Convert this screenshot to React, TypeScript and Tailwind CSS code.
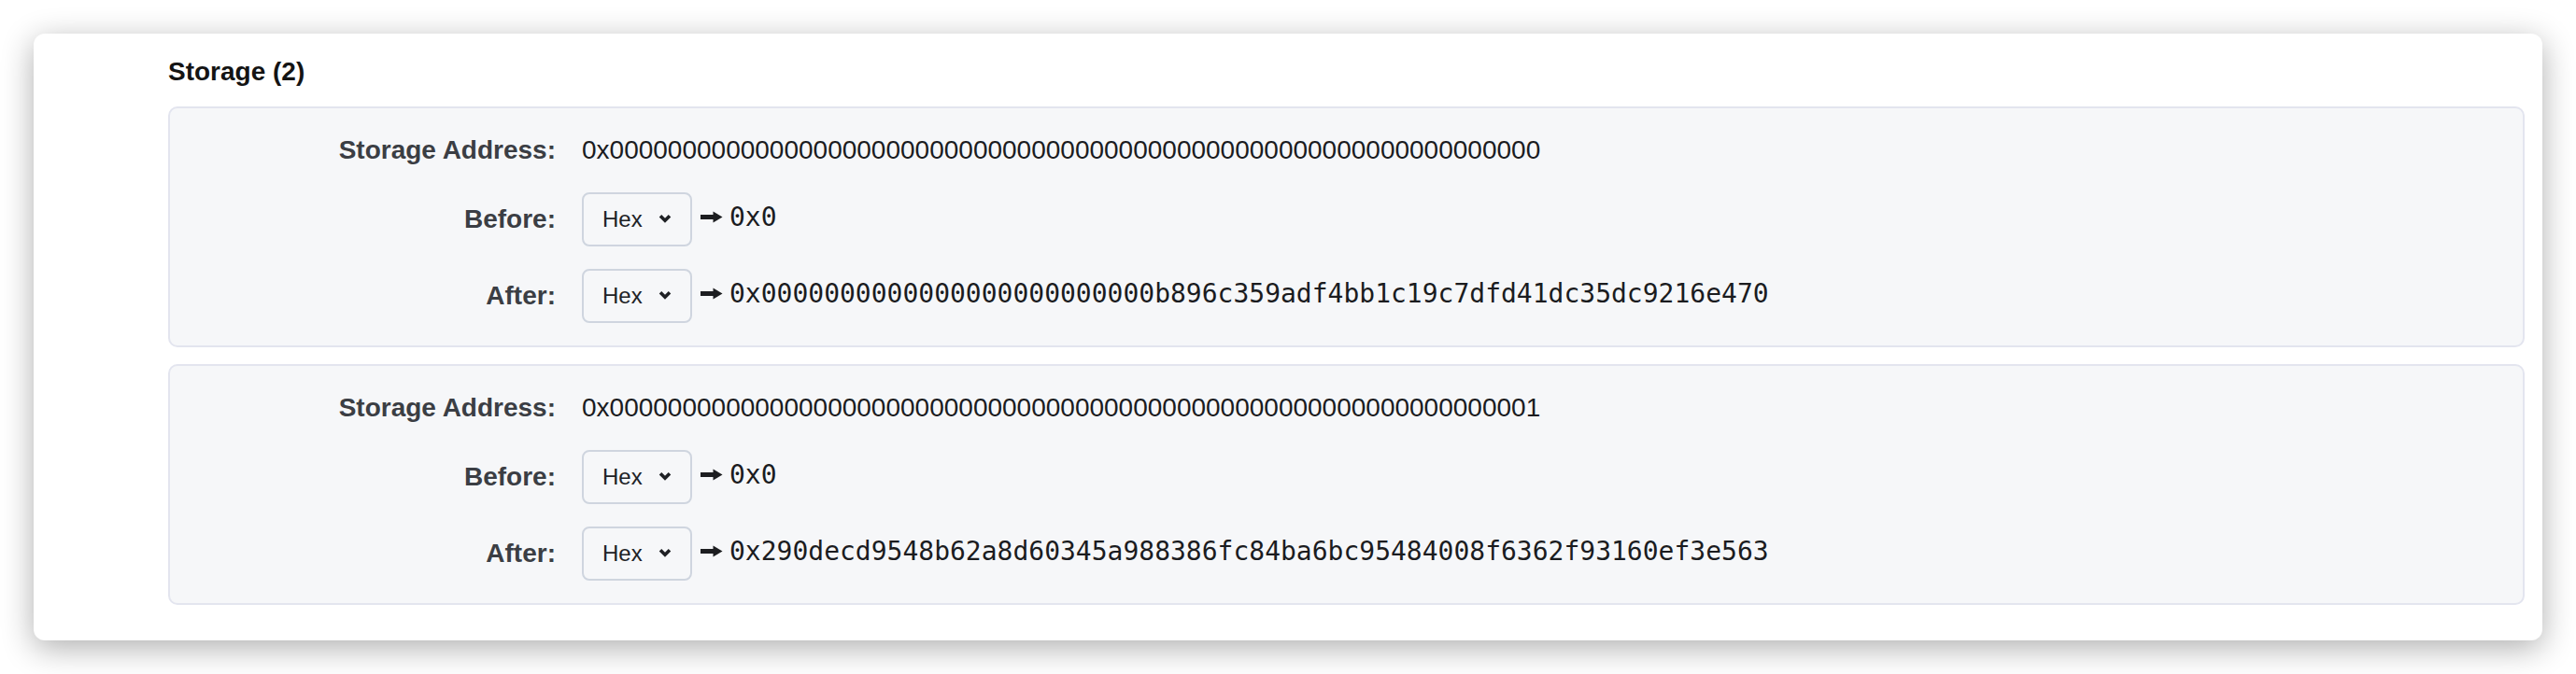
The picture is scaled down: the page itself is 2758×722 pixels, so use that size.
import React from "react";

const SANS = "font-['Liberation_Sans','Helvetica','Arial',sans-serif]";
const MONO = "font-['DejaVu_Sans_Mono','Menlo','Liberation_Mono',monospace]";

function Chevron() {
  return (
    <svg width="14" height="10" viewBox="0 0 14 10" className="-mt-[3px] block">
      <path d="M2 2.2 L7 7.2 L12 2.2" fill="none" stroke="#1f2125" strokeWidth="3.6" strokeLinejoin="miter" />
    </svg>
  );
}

function Arrow() {
  return (
    <svg width="24" height="13" viewBox="0 0 24 13" className="block">
      <rect x="0" y="4" width="15" height="5" fill="#1c1d20" />
      <path d="M13.5 0.5 L23.5 6.5 L13.5 12.5 Z" fill="#1c1d20" />
    </svg>
  );
}

function HexSelect() {
  return (
    <div className="flex h-[58px] w-[118px] items-center justify-between rounded-[8px] border-2 border-[#cfd5df] pl-[20px] pr-[20px]">
      <span className={`${SANS} text-[24px] leading-none text-[#202226]`}>Hex</span>
      <Chevron />
    </div>
  );
}

function ValueRow({ label, value }: { label: string; value: string }) {
  return (
    <div className="flex h-[58px] items-center">
      <div className={`${SANS} w-[389px] shrink-0 text-right text-[28px] font-bold text-[#3b3e44]`}>{label}</div>
      <div className="ml-[28px] flex items-center">
        <HexSelect />
        <div className="ml-[9px] -mt-[5px]">
          <Arrow />
        </div>
        <span className={`${MONO} ml-[7px] -mt-[5px] text-[28px] leading-none text-[#1b1c1f]`}>{value}</span>
      </div>
    </div>
  );
}

function StoragePanel({ address, before, after }: { address: string; before: string; after: string }) {
  return (
    <div className="flex flex-col gap-[24px] rounded-[10px] border-2 border-[#e3e5ef] bg-[#f6f7f9] px-[24px] py-[24px]">
      <div className="flex h-[42px] items-center">
        <div className={`${SANS} w-[389px] shrink-0 text-right text-[28px] font-bold text-[#3b3e44]`}>Storage Address:</div>
        <div className={`${SANS} ml-[28px] text-[28px] text-[#1b1c1f]`}>{address}</div>
      </div>
      <ValueRow label="Before:" value={before} />
      <ValueRow label="After:" value={after} />
    </div>
  );
}

export default function App() {
  const zeros64 = "0".repeat(64);
  const addr1 = "0x" + zeros64;
  const addr2 = "0x" + "0".repeat(63) + "1";
  const after1 = "0x" + "0".repeat(25) + "b896c359adf4bb1c19c7dfd41dc35dc9216e470";
  const after2 = "0x290decd9548b62a8d60345a988386fc84ba6bc95484008f6362f93160ef3e563";
  return (
    <div className="min-h-[722px] w-full bg-white p-[36px]">
      <div className="rounded-[12px] bg-white pb-[38px] pl-[144px] pr-[19px] pt-[20px] shadow-[0_8px_34px_rgba(0,0,0,0.32)]">
        <h2 className={`${SANS} mb-[16px] text-[28px] font-bold leading-[42px] text-[#141414]`}>Storage (2)</h2>
        <div className="flex flex-col gap-[18px]">
          <StoragePanel address={addr1} before="0x0" after={after1} />
          <StoragePanel address={addr2} before="0x0" after={after2} />
        </div>
      </div>
    </div>
  );
}
